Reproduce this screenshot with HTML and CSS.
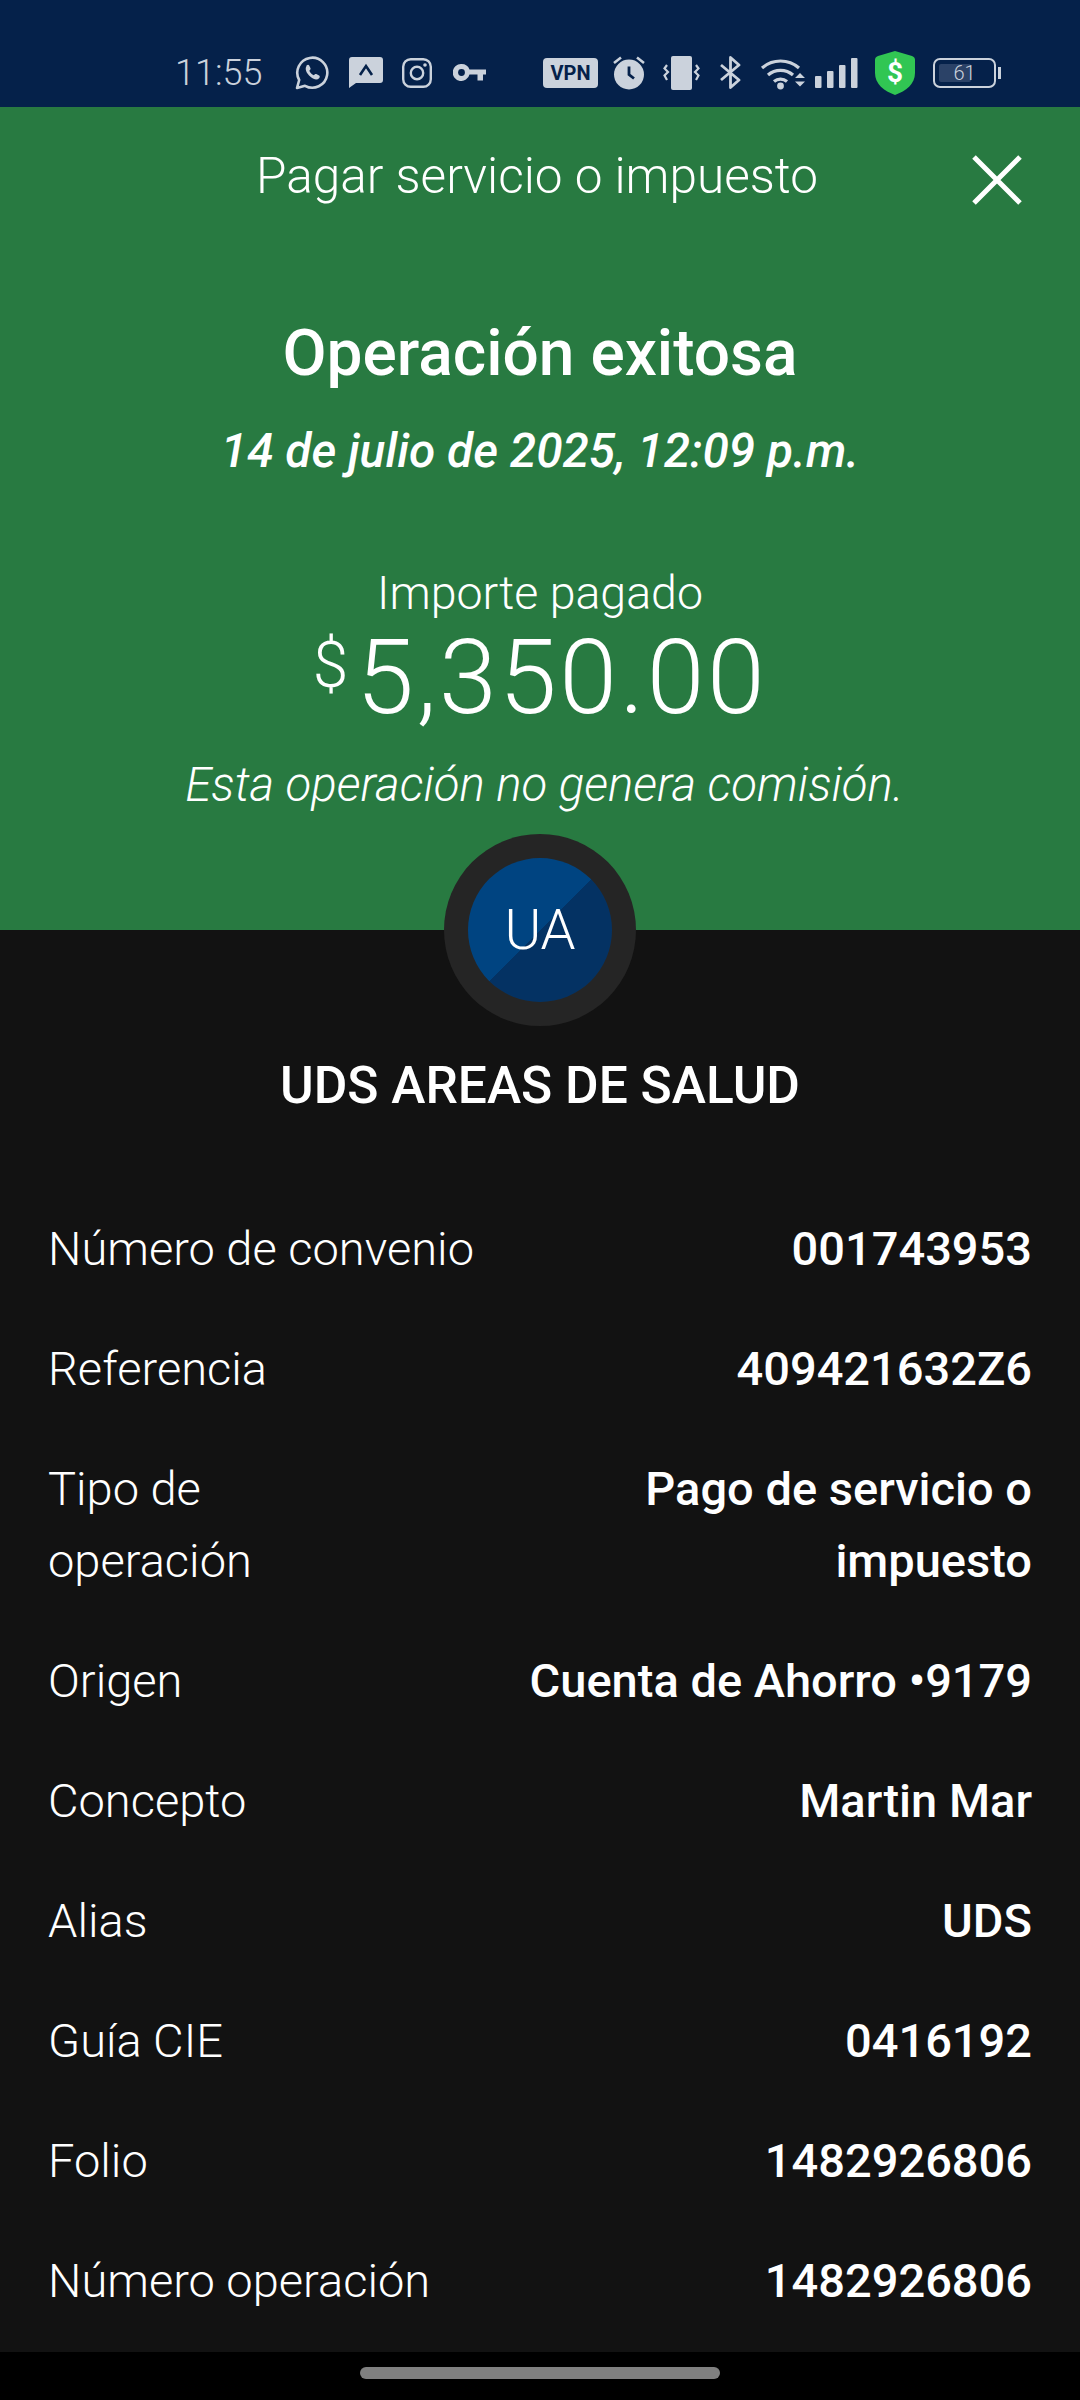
FILE: index.html
```html
<!DOCTYPE html>
<html lang="es">
<head>
<meta charset="UTF-8">
<title>Pagar servicio o impuesto</title>
<link rel="stylesheet" href="styles.css">
</head>
<body>
<div class="status">
	<span class="clock">11:55</span>
	<svg class="ic ic-wa" width="34" height="34" viewBox="0 0 34 34"><path d="M2 32l2.200-8A15 15 0 1 1 10 29.800z" fill="none" stroke="#cbd2dc" stroke-width="2.600" stroke-linejoin="round"/><path d="M11.500 9.500c1-1 2.200-1 2.700 0l1.300 2.800c.3.700 0 1.300-1.200 2.500 1 2 2.500 3.500 4.500 4.500 1.200-1.300 1.800-1.500 2.500-1.200l2.800 1.400c.9.500.9 1.700 0 2.700-2 2-5 1.500-8.600-1.400-4-3.300-6-8-4-10.800z" fill="#cbd2dc"/></svg>
	<svg class="ic ic-msg" width="34" height="31" viewBox="0 0 34 31"><path d="M3 0h28a3 3 0 0 1 3 3v20a3 3 0 0 1-3 3H7l-7 5V3a3 3 0 0 1 3-3z" fill="#cbd2dc"/><path d="M11 18l6-9 6 9" fill="none" stroke="#05214a" stroke-width="2.600"/></svg>
	<svg class="ic ic-ig" width="30" height="30" viewBox="0 0 30 30"><rect x="1.200" y="1.200" width="27.600" height="27.600" rx="7.500" fill="none" stroke="#cbd2dc" stroke-width="2.400"/><circle cx="15" cy="15" r="6.200" fill="none" stroke="#cbd2dc" stroke-width="2.400"/><circle cx="23" cy="7" r="1.800" fill="#cbd2dc"/></svg>
	<svg class="ic ic-key" width="33" height="17" viewBox="0 0 33 17"><path d="M8.500 0a8.500 8.500 0 0 1 8 5.500H33v5h-3v6h-5.500v-6h-8a8.500 8.500 0 1 1-8-10.500z" fill="#cbd2dc"/><circle cx="8.500" cy="8.500" r="3.400" fill="#05214a"/></svg>
	<span class="vpn">VPN</span>
	<svg class="ic ic-alarm" width="32" height="35" viewBox="0 0 32 35"><circle cx="16" cy="19.500" r="15" fill="#cbd2dc"/><path d="M1 8l7-5.500M31 8l-7-5.500" stroke="#cbd2dc" stroke-width="2.600"/><path d="M16 11.500v8l5 4" fill="none" stroke="#05214a" stroke-width="2.800"/></svg>
	<svg class="ic ic-vib" width="37" height="34" viewBox="0 0 37 34"><rect x="8" y="0" width="21" height="34" rx="2" fill="#cbd2dc"/><path d="M4 9l-2.500 3.500L5 16l-3.500 3.500L4 24M33 9l2.500 3.500L32 16l3.500 3.500L33 24" fill="none" stroke="#cbd2dc" stroke-width="2.200"/></svg>
	<svg class="ic ic-bt" width="21" height="33" viewBox="0 0 21 33"><path d="M1 9l18 15-8.500 7.500v-30L19 9 1 24" fill="none" stroke="#cbd2dc" stroke-width="2.800" stroke-linejoin="round"/></svg>
	<svg class="ic ic-wifi" width="45" height="34" viewBox="0 0 45 34"><path d="M2 12a28 28 0 0 1 37 0M8 19a19 19 0 0 1 25 0M14 25.500a10 10 0 0 1 13 0" fill="none" stroke="#cbd2dc" stroke-width="3.200"/><circle cx="20.500" cy="30" r="3.400" fill="#cbd2dc"/><path d="M35 22l5-5 5 5zM35 25.500h10l-5 5z" fill="#cbd2dc"/></svg>
	<svg class="ic ic-sig" width="43" height="30" viewBox="0 0 43 30"><rect x="0" y="18" width="6.500" height="12" rx="1" fill="#cbd2dc"/><rect x="12" y="13" width="6.500" height="17" rx="1" fill="#cbd2dc"/><rect x="24" y="7" width="6.500" height="23" rx="1" fill="#cbd2dc"/><rect x="36" y="0" width="6.500" height="30" rx="1" fill="#cbd2dc"/></svg>
	<svg class="ic ic-shield" width="40" height="44" viewBox="0 0 40 44"><path d="M20 0l17 5q3 1 3 4v13c0 11-9 18-20 22C9 40 0 33 0 22V9q0-3 3-4z" fill="#31c653"/><text x="20" y="31" text-anchor="middle" class="shield-sign">$</text></svg>
	<div class="battery"><span class="level"></span><span class="batt-num">61</span></div>
</div>

<div class="hero">
	<div class="topbar">
		<span class="topbar-title">Pagar servicio o impuesto</span>
		<svg class="close" width="50" height="50" viewBox="0 0 50 50"><path d="M2 2l46 46M48 2L2 48" stroke="#fff" stroke-width="5"/></svg>
	</div>
	<h1 class="result">Operación exitosa</h1>
	<p class="date">14 de julio de 2025, 12:09 p.m.</p>
	<p class="amount-label">Importe pagado</p>
	<p class="amount"><span class="cur">$</span>5,350.00</p>
	<p class="note">Esta operación no genera comisión.</p>
</div>

<div class="detail">
	<div class="avatar"><span class="avatar-in">UA</span></div>
	<h2 class="payee">UDS AREAS DE SALUD</h2>
	<div class="rows">
		<div class="row"><span class="k">Número de convenio</span><span class="v">001743953</span></div>
		<div class="row"><span class="k">Referencia</span><span class="v">409421632Z6</span></div>
		<div class="row"><span class="k narrow">Tipo de operación</span><span class="v thin">Pago de servicio o impuesto</span></div>
		<div class="row"><span class="k">Origen</span><span class="v">Cuenta de Ahorro •9179</span></div>
		<div class="row"><span class="k">Concepto</span><span class="v">Martin Mar</span></div>
		<div class="row"><span class="k">Alias</span><span class="v">UDS</span></div>
		<div class="row"><span class="k">Guía CIE</span><span class="v">0416192</span></div>
		<div class="row"><span class="k">Folio</span><span class="v">1482926806</span></div>
		<div class="row"><span class="k">Número operación</span><span class="v">1482926806</span></div>
	</div>
</div>

<div class="navbar"><span class="pill"></span></div>
</body>
</html>
```

FILE: styles.css
```css
* {
	box-sizing: border-box;
}

html,
body {
	margin: 0;
	padding: 0;
}

body {
	width: 1080px;
	height: 2400px;
	overflow: hidden;
	background: #000;
	color: #fff;
	font-family: Roboto, "Liberation Sans", sans-serif;
}

h1,
h2,
p {
	margin: 0;
	font-weight: normal;
}

/* status bar */
.status {
	height: 107px;
	background: #05214a;
	display: flex;
	align-items: center;
	padding: 38px 0 0 175px;
	color: #cbd2dc;
}

.clock {
	font-size: 36px;
	font-weight: 300;
	width: 88px;
	margin-right: 32px;
}

.ic {
	flex: none;
	display: block;
}

.ic-msg {
	margin-left: 20px;
}

.ic-ig {
	margin-left: 19px;
}

.ic-key {
	margin-left: 21px;
}

.vpn {
	margin-left: 57px;
	width: 55px;
	height: 30px;
	border-radius: 4px;
	background: #cbd2dc;
	color: #05214a;
	font-size: 20px;
	font-weight: 700;
	line-height: 30px;
	text-align: center;
}

.ic-alarm {
	margin-left: 15px;
}

.ic-vib {
	margin-left: 18px;
}

.ic-bt {
	margin-left: 20px;
}

.ic-wifi {
	margin-left: 19px;
}

.ic-sig {
	margin-left: 10px;
}

.ic-shield {
	margin-left: 17px;
}

.shield-sign {
	font-size: 28px;
	font-weight: 700;
	fill: #fff;
}

.battery {
	position: relative;
	margin-left: 18px;
	width: 63px;
	height: 30px;
	border: 2px solid #cbd2dc;
	border-radius: 7px;
	padding: 4px;
	font-size: 20px;
	font-weight: 300;
	line-height: 18px;
	text-align: center;
}

.battery::after {
	content: "";
	position: absolute;
	right: -7px;
	top: 7px;
	width: 3px;
	height: 12px;
	background: #cbd2dc;
}

.level {
	position: absolute;
	left: 4px;
	top: 4px;
	width: 32px;
	height: 18px;
	border-radius: 2px;
	background: #2b4267;
}

.batt-num {
	position: relative;
}

/* green header */
.hero {
	height: 823px;
	background: #287a41;
	text-align: center;
}

.topbar {
	position: relative;
	height: 138px;
	display: flex;
	align-items: center;
	justify-content: center;
}

.topbar-title {
	font-size: 49.500px;
	font-weight: 300;
	margin-left: -6px;
}

.close {
	position: absolute;
	right: 58px;
	top: 48px;
}

.result {
	margin-top: 74px;
	font-size: 64px;
	line-height: 70px;
	font-weight: 500;
}

.date {
	margin-top: 37px;
	font-size: 47.800px;
	line-height: 50px;
	font-weight: 500;
	font-style: italic;
}

.amount-label {
	margin-top: 92px;
	font-size: 46.500px;
	line-height: 50px;
	font-weight: 300;
}

.amount {
	margin-top: -7px;
	font-size: 104px;
	line-height: 110px;
	font-weight: 300;
	letter-spacing: 2.500px;
}

.cur {
	font-size: 64px;
	vertical-align: 26px;
	margin-right: 8px;
	letter-spacing: 0;
}

.note {
	margin-top: 27px;
	padding-left: 9px;
	font-size: 47.400px;
	line-height: 50px;
	font-weight: 300;
	font-style: italic;
}

/* dark detail area */
.detail {
	display: flow-root;
	height: 1422px;
	background: #121212;
	padding: 0 48px;
}

.avatar {
	position: relative;
	width: 192px;
	height: 192px;
	margin: -96px auto 0;
	border-radius: 50%;
	background: #252525;
	display: flex;
	align-items: center;
	justify-content: center;
}

.avatar-in {
	width: 144px;
	height: 144px;
	border-radius: 50%;
	background: linear-gradient(135deg, #004481 50%, #043263 50%);
	font-size: 56px;
	font-weight: 300;
	line-height: 144px;
	text-align: center;
}

.payee {
	margin-top: 30px;
	font-size: 51.500px;
	line-height: 60px;
	font-weight: 500;
	text-align: center;
}

.rows {
	margin-top: 97px;
	display: flex;
	flex-direction: column;
	gap: 48px;
}

.row {
	display: flex;
	justify-content: space-between;
	font-size: 47px;
	line-height: 72px;
}

.k {
	font-weight: 300;
}

.v {
	font-weight: 500;
	text-align: right;
}

.narrow {
	width: 240px;
}

.thin {
	width: 420px;
}

.navbar {
	height: 48px;
	padding-top: 15px;
}

.pill {
	display: block;
	width: 360px;
	height: 12px;
	margin: 0 auto;
	border-radius: 6px;
	background: #808080;
}
```
